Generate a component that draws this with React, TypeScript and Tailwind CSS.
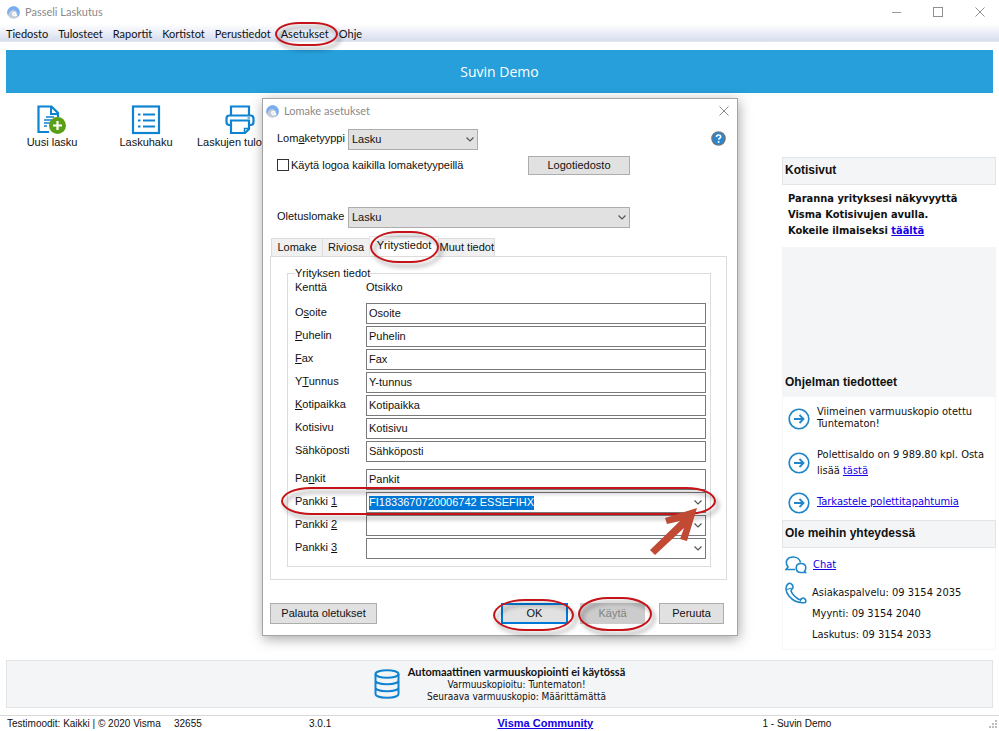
import React from "react";

const arial = "font-['Liberation_Sans',Arial,sans-serif]";
const segoe = "font-['Open_Sans','Segoe_UI',sans-serif]";
const lato = "font-[Lato,'Segoe_UI',sans-serif]";
const tahoma = "font-['DejaVu_Sans_Condensed',Tahoma,sans-serif]";

function Ring({ className }: { className: string }) {
  return (
    <span
      aria-hidden="true"
      className={`pointer-events-none absolute z-10 border-2 border-[#c4141a] drop-shadow-[3px_4px_2px_rgba(0,0,0,0.4)] ${className}`}
    />
  );
}

function AppLogo() {
  return (
    <svg width="13" height="13" viewBox="0 0 26 26" aria-hidden="true">
      <circle cx="13" cy="13" r="12.500" fill="#c3cbd8" />
      <path d="M2 19A12.500 12.500 0 1 1 25.500 13c0 4-2 8-5 10 2-8-1-15-8-15-5 0-9 4-10.500 11z" fill="#78aef0" />
      <path d="M19 18c-5 3-9-1-7-4 2-2 5-1 5 2" fill="none" stroke="#fff" strokeWidth="3" strokeLinecap="round" />
    </svg>
  );
}

function CloseIcon() {
  return (
    <svg width="10" height="10" viewBox="0 0 10 10" fill="none" stroke="#8f8f8f" aria-hidden="true">
      <path d="M0.500 0.500l9 9M9.500 0.500l-9 9" />
    </svg>
  );
}

function Chevron() {
  return (
    <svg width="8" height="5" viewBox="0 0 8 5" fill="none" stroke="#555" strokeWidth="1.200" aria-hidden="true">
      <path d="M0.500 0.500L4 4l3.500-3.500" />
    </svg>
  );
}

function NewInvoiceIcon() {
  return (
    <svg width="30" height="30" viewBox="0 0 30 30" fill="none" aria-hidden="true">
      <path d="M12 27H1.500V1.500h13L21 8v4" stroke="#0f83d1" strokeWidth="2.200" />
      <path d="M14 1.500V9h7" stroke="#0f83d1" strokeWidth="2" />
      <path d="M9 12h8M7 15h8M7 18h6M7 21h3" stroke="#0f83d1" strokeWidth="1.300" />
      <circle cx="20.500" cy="20.500" r="8.500" fill="#5b9f17" />
      <path d="M20.500 16v9M16 20.500h9" stroke="#fff" strokeWidth="2.200" />
    </svg>
  );
}

function ListIcon() {
  return (
    <svg width="30" height="30" viewBox="0 0 30 30" fill="none" stroke="#0f83d1" aria-hidden="true">
      <rect x="2" y="1.500" width="26" height="26.500" strokeWidth="2.200" />
      <path d="M12 9.500h12M12 15.500h12M12 21.500h12" strokeWidth="2" />
      <path d="M7 9.500h2.500M7 15.500h2.500M7 21.500h2.500" strokeWidth="2.200" />
    </svg>
  );
}

function PrinterIcon() {
  return (
    <svg width="30" height="30" viewBox="0 0 30 30" fill="none" stroke="#0f83d1" strokeWidth="2.200" aria-hidden="true">
      <path d="M6 11V1.500h18V11" />
      <path d="M6 20H4.500Q1.500 20 1.500 17V13.500q0-3 3-3h21q3 0 3 3V17q0 3-3 3H24" />
      <path d="M6 15.500h18V24l-4 4H6z" />
      <path d="M24 23.500h-4.500V28" strokeWidth="1.500" />
      <path d="M22.500 13h2.500" strokeWidth="1.200" />
    </svg>
  );
}

function ArrowCircle() {
  return (
    <svg className="shrink-0" width="22" height="22" viewBox="0 0 22 22" fill="none" stroke="#1e86c9" aria-hidden="true">
      <circle cx="11" cy="11" r="9.800" strokeWidth="1.600" />
      <path d="M6 11h9.500M11.500 7l4 4-4 4" strokeWidth="1.800" />
    </svg>
  );
}

function ChatIcon() {
  return (
    <svg className="shrink-0" width="22" height="18" viewBox="0 0 22 18" fill="none" stroke="#1e86c9" strokeWidth="1.600" aria-hidden="true">
      <path d="M10 13.500H1l2-2.500C-1 5 3 1 8 1c4 0 7 2.500 7.500 5.500" />
      <path d="M20.500 16.500h-4.500c-3 0-4.800-2-4.800-4.500S13 7.500 16 7.500s4.800 2 4.800 4.500c0 1-.5 2-1.200 3z" />
    </svg>
  );
}

function PhoneIcon() {
  return (
    <svg className="shrink-0" width="22" height="22" viewBox="0 0 22 22" fill="none" stroke="#1e86c9" strokeWidth="1.600" strokeLinejoin="round" aria-hidden="true">
      <path d="M3.500 1.500C0 4 0 9 4 14s10 7.500 16.500 6.500c1-2-.5-4.500-2.500-4.500-1.500 0-2 2-4 1.500C11 16 7 12 6 9c0-2 2.500-2.500 2-4.500C7.500 2.500 5.500.5 3.500 1.500z" />
      <path d="M2 7.500l4.500-1.500M14.500 20.500l2-4" strokeWidth="1.200" />
    </svg>
  );
}

function DatabaseIcon() {
  return (
    <svg width="26" height="30" viewBox="0 0 26 30" fill="none" stroke="#0f83d1" strokeWidth="2" aria-hidden="true">
      <ellipse cx="13" cy="5" rx="11.500" ry="3.800" />
      <path d="M1.500 5v20c0 5 23 5 23 0V5M1.500 11.500c0 5 23 5 23 0M1.500 18.500c0 5 23 5 23 0" />
    </svg>
  );
}

function HelpIcon() {
  return (
    <svg width="15" height="15" viewBox="0 0 15 15" aria-hidden="true">
      <circle cx="7.500" cy="7.500" r="6.600" fill="#2a86cf" stroke="#6b7680" strokeWidth="1.400" />
      <path d="M5.500 6c0-2.600 4.200-2.600 4.200-.2 0 1.500-2 1.400-2 3" fill="none" stroke="#fff" strokeWidth="1.600" />
      <circle cx="7.600" cy="10.900" r="1" fill="#fff" />
    </svg>
  );
}

const menuItems = ["Tiedosto", "Tulosteet", "Raportit", "Kortistot", "Perustiedot", "Asetukset", "Ohje"];

function TitleAndMenu() {
  return (
    <header className={lato}>
      <div className="flex h-6 items-center gap-[5px] pl-[7px] pr-3.5 text-[11px] text-[#8a8a8a]">
        <AppLogo />
        <span className="flex-1">Passeli Laskutus</span>
        <div className="flex items-center gap-8">
          <button aria-label="Pienennä" className="flex h-3 items-center"><span className="block h-px w-[9px] bg-[#999]" /></button>
          <button aria-label="Suurenna" className="size-[10px] border border-[#8f8f8f]" />
          <button aria-label="Sulje"><CloseIcon /></button>
        </div>
      </div>
      <nav className="flex h-[18px] items-center gap-2.5 border-b border-[#e4e6ee] bg-linear-to-b from-white to-[#d7ddef] pl-1.5 text-[11px] text-[#111]">
        {menuItems.map((item) => (
          <button key={item} className="relative pt-1">
            {item}
            {item === "Asetukset" && <Ring className="-left-1.5 top-0 h-6 w-[63px] rounded-[24px/12px]" />}
          </button>
        ))}
      </nav>
    </header>
  );
}

const tools = [
  { label: "Uusi lasku", icon: <NewInvoiceIcon />, align: "text-center" },
  { label: "Laskuhaku", icon: <ListIcon />, align: "text-center" },
  { label: "Laskujen tulo", icon: <PrinterIcon />, align: "text-left" },
];

const link = "text-[#1500e8] underline";

function Sidebar() {
  return (
    <aside className={`mr-[3px] w-[214px] shrink-0 pt-16 text-[11px] text-[#111] ${tahoma}`}>
      <h2 className={`h-7 border border-[#e2e5e8] bg-[#f4f5f7] pl-0.5 text-[12px] font-bold leading-6 ${arial}`}>Kotisivut</h2>
      <p className="h-[62px] pl-1.5 pt-1.5 font-bold leading-4">
        Paranna yrityksesi näkyvyyttä<br />Visma Kotisivujen avulla.<br />Kokeile ilmaiseksi <a href="#kotisivut" className={link}>täältä</a>
      </p>
      <div className="flex h-[150px] items-end bg-[#f4f5f7] pb-1.5 pl-[3px]">
        <h2 className={`text-[12px] font-bold ${arial}`}>Ohjelman tiedotteet</h2>
      </div>
      <ul className="border-x border-[#f7f7f7]">
        <li className="flex h-11 items-center gap-[7px] pl-[5px] leading-3"><ArrowCircle /><span className="pb-0.5">Viimeinen varmuuskopio otettu<br />Tuntematon!</span></li>
        <li className="flex h-11 items-center gap-[7px] pl-[5px] leading-4"><ArrowCircle /><span>Polettisaldo on 9 989.80 kpl. Osta<br />lisää <a href="#osta" className={link}>tästä</a></span></li>
        <li className="flex h-[35px] items-center gap-[7px] pl-[5px]"><ArrowCircle /><a href="#poletit" className={link}>Tarkastele polettitapahtumia</a></li>
      </ul>
      <h2 className={`h-7 border border-[#e2e5e8] bg-[#f4f5f7] pl-0.5 text-[12px] font-bold leading-6 ${arial}`}>Ole meihin yhteydessä</h2>
      <div className="border border-t-0 border-[#f7f7f7] pb-1 pl-0.5 pt-2">
        <div className="flex items-center gap-1.5"><ChatIcon /><a href="#chat" className={link}>Chat</a></div>
        <div className="flex gap-[5px] pt-2">
          <PhoneIcon />
          <div className="leading-[21px]">
            <p>Asiakaspalvelu: 09 3154 2035</p>
            <p>Myynti: 09 3154 2040</p>
            <p>Laskutus: 09 3154 2033</p>
          </div>
        </div>
      </div>
    </aside>
  );
}

function SelectBox({ id, className }: { id: string; className: string }) {
  return (
    <div className={`relative ${className}`}>
      <select id={id} className="h-[21px] w-full appearance-none border border-[#adadad] bg-[#e1e1e1] pl-[3px]"><option>Lasku</option></select>
      <span className="pointer-events-none absolute right-1 top-2"><Chevron /></span>
    </div>
  );
}

type Field = { id: string; pre: string; key: string; post: string; value: string };

const fields: Field[] = [
  { id: "osoite", pre: "O", key: "s", post: "oite", value: "Osoite" },
  { id: "puhelin", pre: "", key: "P", post: "uhelin", value: "Puhelin" },
  { id: "fax", pre: "", key: "F", post: "ax", value: "Fax" },
  { id: "ytunnus", pre: "Y", key: "T", post: "unnus", value: "Y-tunnus" },
  { id: "kotipaikka", pre: "", key: "K", post: "otipaikka", value: "Kotipaikka" },
  { id: "kotisivu", pre: "Kotisivu", key: "", post: "", value: "Kotisivu" },
  { id: "sahkoposti", pre: "Sähköposti", key: "", post: "", value: "Sähköposti" },
];

const banks: Field[] = [
  { id: "pankki1", pre: "Pankki ", key: "1", post: "", value: "FI1833670720006742 ESSEFIHX" },
  { id: "pankki2", pre: "Pankki ", key: "2", post: "", value: "" },
  { id: "pankki3", pre: "Pankki ", key: "3", post: "", value: "" },
];

function FieldLabel({ field }: { field: Field }) {
  return (
    <label htmlFor={field.id} className="w-[71px] shrink-0 pt-px">
      {field.pre}<u>{field.key}</u>{field.post}
    </label>
  );
}

function TextRow({ field }: { field: Field }) {
  return (
    <div className="flex h-[23px] items-start">
      <FieldLabel field={field} />
      <input id={field.id} defaultValue={field.value} className="h-[21px] min-w-0 flex-1 border border-[#7a7a7a] bg-white pb-0.5 pl-0.5" />
    </div>
  );
}

function BankRow({ field }: { field: Field }) {
  const filled = field.value !== "";
  return (
    <div className="relative flex h-[23px] items-start">
      <FieldLabel field={field} />
      <div className="flex h-[21px] min-w-0 flex-1 items-center border border-[#7a7a7a] bg-white pl-0.5 pr-[3px]">
        <input
          id={field.id}
          defaultValue={field.value}
          className={filled ? "field-sizing-content h-[14px] bg-[#0078d7] text-white" : "min-w-0 flex-1"}
        />
        <button aria-label="Avaa luettelo" className="ml-auto"><Chevron /></button>
      </div>
      {filled && (
        <>
          <Ring className="-left-3.5 -right-2.5 -top-[5px] h-[28px] rounded-[30px/14px]" />
          <svg className="pointer-events-none absolute right-1 top-[13px] z-20" width="54" height="52" viewBox="0 0 54 52" aria-hidden="true">
            <path d="M49 3L17 13l2 6 13-3L2 45l5 5 29-27-4 11 7 2z" fill="#c04a33" />
          </svg>
        </>
      )}
    </div>
  );
}

const dialogButton = "relative h-[21px] border border-[#adadad] bg-[#e1e1e1]";

function SettingsDialog() {
  return (
    <section
      role="dialog"
      aria-label="Lomake asetukset"
      className={`absolute left-[262px] top-[98px] w-[476px] border border-[#a5a5a5] bg-white text-[11px] text-[#111] shadow-[1px_3px_12px_rgba(0,0,0,0.35)] ${arial}`}
    >
      <div className={`flex h-6 items-center gap-[5px] pl-[3px] pr-2 text-[11px] text-[#8a8a8a] ${lato}`}>
        <AppLogo />
        <h1 className="flex-1">Lomake asetukset</h1>
        <button aria-label="Sulje"><CloseIcon /></button>
      </div>
      <div className="flex items-start pl-3.5 pr-[11px] pt-1.5">
        <label htmlFor="tyyppi" className="w-[71px] pt-px">Lom<u>a</u>ketyyppi</label>
        <SelectBox id="tyyppi" className="w-[130px]" />
        <button aria-label="Ohje" className="ml-auto pt-0.5"><HelpIcon /></button>
      </div>
      <div className="flex h-[25px] items-end pl-3.5">
        <label className="flex w-[251px] items-center gap-0.5 pb-0.5">
          <input type="checkbox" className="size-3 appearance-none border border-[#333] bg-white" />
          Käytä logoa kaikilla lomaketyypeillä
        </label>
        <button className="h-[19px] w-[102px] border border-[#adadad] bg-[#e1e1e1]">Logotiedosto</button>
      </div>
      <div className="flex items-start pl-3.5 pt-8">
        <label htmlFor="oletus" className="w-[71px] pt-px">Oletuslomake</label>
        <SelectBox id="oletus" className="w-[282px]" />
      </div>
      <div className="pl-[7px] pr-2.5 pt-2">
        <div role="tablist" className="flex h-5 items-end pl-px">
          <button role="tab" className="h-[18px] w-[52px] border border-b-0 border-[#dcdcdc] bg-[#f0f0f0]">Lomake</button>
          <button role="tab" className="h-[18px] w-[46px] border-t border-[#dcdcdc] bg-[#f0f0f0]">Riviosa</button>
          <button role="tab" aria-selected="true" className="relative h-5 w-[70px] border border-b-0 border-[#e6e6e6] bg-white pb-0.5">
            Yritystiedot
            <Ring className="left-0 -top-[6px] h-[32px] w-[69px] rounded-[28px/16px]" />
          </button>
          <button role="tab" className="h-[18px] w-[56px] border border-b-0 border-l-0 border-[#dcdcdc] bg-[#f0f0f0] text-right">Muut tiedot</button>
        </div>
        <div role="tabpanel" className="border border-[#dcdcdc] pb-3 pl-4 pr-[15px] pt-2.5">
          <fieldset className="border border-[#dcdcdc] pb-[5px] pl-[7px] pr-1">
            <legend className="h-3 leading-3">Yrityksen tiedot</legend>
            <div className="flex pb-2 leading-4"><span className="w-[71px]">Kenttä</span><span>Otsikko</span></div>
            {fields.map((f) => <TextRow key={f.id} field={f} />)}
            <div className="pt-[5px]">
              <TextRow field={{ id: "pankit", pre: "Pa", key: "n", post: "kit", value: "Pankit" }} />
              {banks.map((f) => <BankRow key={f.id} field={f} />)}
            </div>
          </fieldset>
        </div>
      </div>
      <div className="flex pb-[11px] pl-[7px] pr-[13px] pt-[23px]">
        <button className={`${dialogButton} mr-auto w-[107px]`}>Palauta oletukset</button>
        <button className="relative mr-3 h-[21px] w-[67px] border-2 border-[#0078d7] bg-[#e1e1e1]">
          OK
          <Ring className="-left-2.5 -top-1.5 h-8 w-[81px] rounded-[32px/16px]" />
        </button>
        <button className="relative mr-3.5 h-[21px] w-[65px] bg-[#cccccc] text-[#838383]">
          Käytä
          <Ring className="-left-0.5 -top-1.5 h-[34px] w-[74px] rounded-[30px/17px]" />
        </button>
        <button className={`${dialogButton} w-[65px]`}>Peruuta</button>
      </div>
    </section>
  );
}

export default function App() {
  return (
    <div className={`relative flex min-h-screen flex-col overflow-hidden bg-white text-[#111] ${arial}`}>
      <TitleAndMenu />
      <div className={`mx-1.5 mt-2 flex h-[43px] items-center justify-center bg-[#269fdb] text-[14px] text-white ${segoe}`}>Suvin Demo</div>
      <main className="flex flex-1 items-start justify-between">
        <div className="flex pl-[5px] pt-3">
          {tools.map((tool) => (
            <button key={tool.label} className="flex w-[94px] flex-col items-center whitespace-nowrap text-[11px] leading-[14px]">
              {tool.icon}
              <span className={`w-[86px] ${tool.align}`}>{tool.label}</span>
            </button>
          ))}
        </div>
        <Sidebar />
      </main>
      <section className={`mx-1.5 mb-[7px] flex h-12 items-center justify-center gap-2 border border-[#e2e5e8] bg-[#f4f5f7] text-[10px] leading-3 ${tahoma}`}>
        <DatabaseIcon />
        <div className="text-center">
          <p className={`text-[11px] font-bold leading-[14px] ${lato}`}>Automaattinen varmuuskopiointi ei käytössä</p>
          <p>Varmuuskopioitu: Tuntematon!</p>
          <p>Seuraava varmuuskopio: Määrittämättä</p>
        </div>
      </section>
      <footer className="flex h-4 items-center border-t border-[#d9d9d9] pl-[7px] text-[10px]">
        <span className="w-[167px]">Testimoodit: Kaikki | © 2020 Visma</span>
        <span className="w-[135px]">32655</span>
        <span className="w-[19%]">3.0.1</span>
        <a href="#community" className="w-[265px] text-[11px] font-bold text-[#1500e8] underline">Visma Community</a>
        <span>1 - Suvin Demo</span>
        <svg className="ml-auto" width="12" height="12" viewBox="0 0 12 12" fill="#bdbdbd" aria-hidden="true">
          <path d="M8 2h2v2H8zM5 5h2v2H5zM8 5h2v2H8zM2 8h2v2H2zM5 8h2v2H5zM8 8h2v2H8z" />
        </svg>
      </footer>
      <SettingsDialog />
    </div>
  );
}
